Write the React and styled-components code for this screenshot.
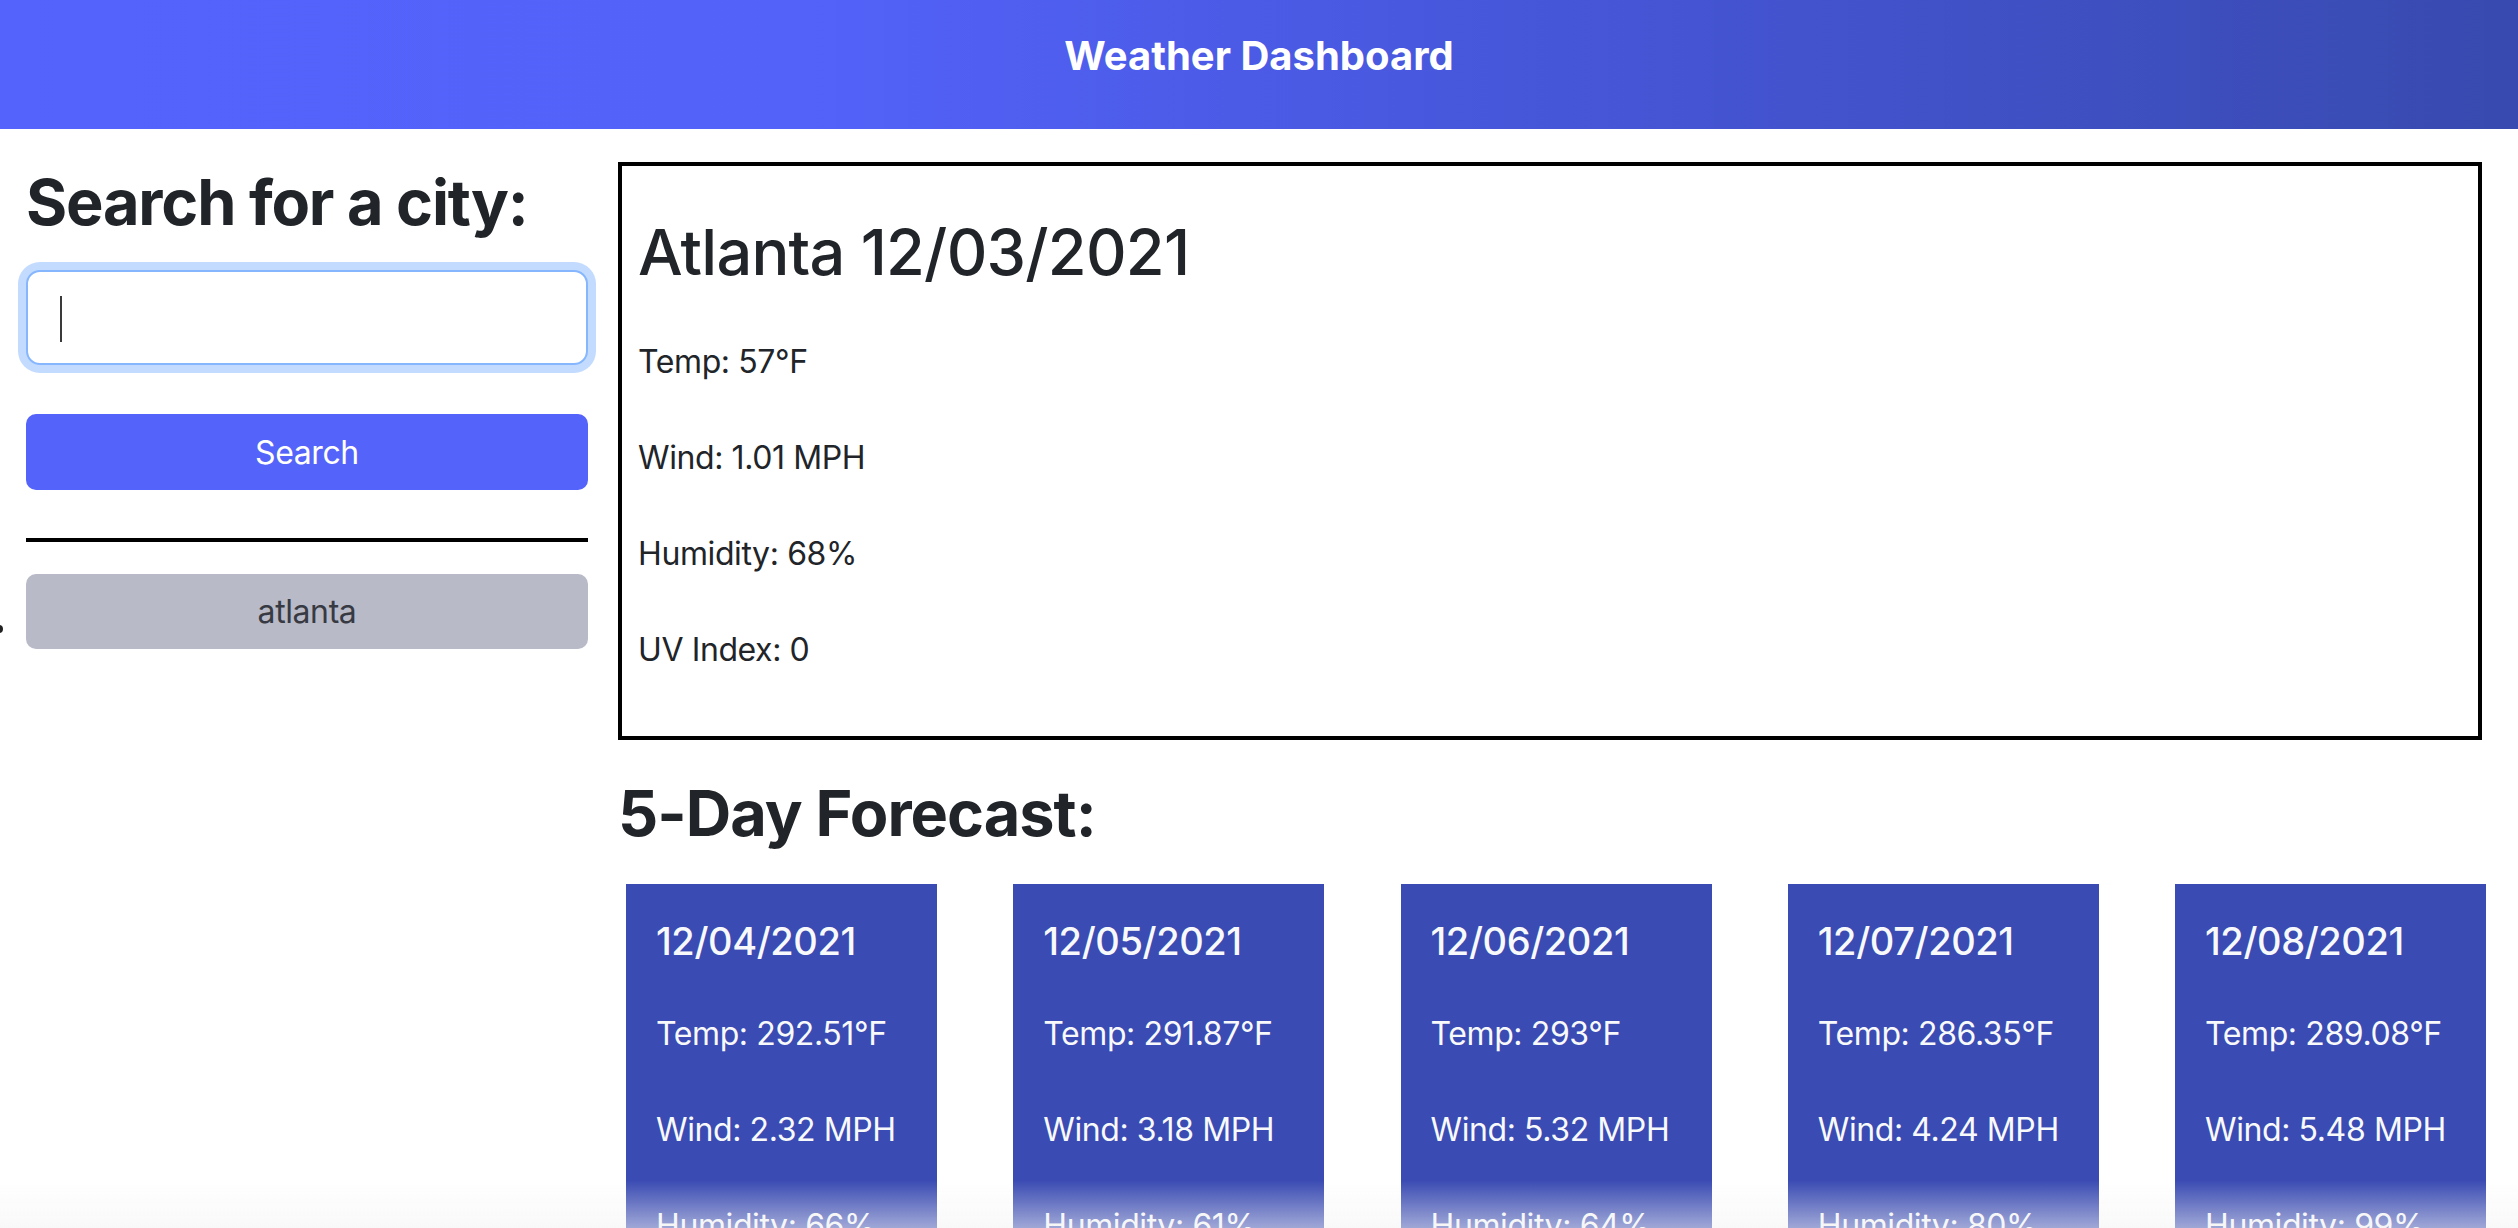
import React from 'react'
import styled, { createGlobalStyle } from 'styled-components'

const forecast = [
  { date: '12/04/2021', temp: '292.51', wind: '2.32', humidity: '66' },
  { date: '12/05/2021', temp: '291.87', wind: '3.18', humidity: '61' },
  { date: '12/06/2021', temp: '293', wind: '5.32', humidity: '64' },
  { date: '12/07/2021', temp: '286.35', wind: '4.24', humidity: '80' },
  { date: '12/08/2021', temp: '289.08', wind: '5.48', humidity: '99' },
]

const App = () => {
  return (
    <>
      <GlobalStyle />
      <Header>
        <HeaderTitle>Weather Dashboard</HeaderTitle>
      </Header>
      <Main>
        <Sidebar>
          <SideTitle>Search for a city:</SideTitle>
          <InputWrap>
            <CityInput type='text' />
            <Caret />
          </InputWrap>
          <SearchButton>Search</SearchButton>
          <Divider />
          <HistoryButton>atlanta</HistoryButton>
        </Sidebar>
        <Content>
          <Current>
            <CityTitle>Atlanta 12/03/2021</CityTitle>
            <Lines>
              <Line>Temp: 57°F</Line>
              <Line>Wind: 1.01 MPH</Line>
              <Line>Humidity: 68%</Line>
              <Line>UV Index: 0</Line>
            </Lines>
          </Current>
          <ForecastTitle>5-Day Forecast:</ForecastTitle>
          <ForecastRow>
            {forecast.map((day) => (
              <DayCard key={day.date}>
                <DayDate>{day.date}</DayDate>
                <Lines>
                  <Line light>Temp: {day.temp}°F</Line>
                  <Line light>Wind: {day.wind} MPH</Line>
                  <Line light>Humidity: {day.humidity}%</Line>
                </Lines>
              </DayCard>
            ))}
          </ForecastRow>
        </Content>
      </Main>
      <BottomFade />
    </>
  )
}

export default App

const GlobalStyle = createGlobalStyle`
  * {
    box-sizing: border-box;
  }
  body {
    margin: 0;
    font-family: 'Inter', 'Noto Sans', sans-serif;
    color: #212529;
    background: #ffffff;
  }
`

const Header = styled.header`
  height: 129px;
  padding-top: 32px;
  display: flex;
  justify-content: center;
  align-items: flex-start;
  background: linear-gradient(
    90deg,
    #5463fb 0%,
    #5362f9 32%,
    #4656d8 62%,
    #384aaf 100%
  );
`
const HeaderTitle = styled.h1`
  margin: 0;
  font-size: 40px;
  line-height: 48px;
  font-weight: 700;
  color: #ffffff;
`
const Main = styled.main`
  display: flex;
  align-items: flex-start;
  padding: 33px 32px 0 26px;
`
const Sidebar = styled.aside`
  width: 562px;
  flex-shrink: 0;
  padding-top: 2px;
  display: flex;
  flex-direction: column;
`
const SideTitle = styled.h2`
  margin: 0 0 29px;
  font-size: 63px;
  line-height: 77px;
  font-weight: 700;
  letter-spacing: -1.2px;
  color: #212529;
`
const InputWrap = styled.div`
  position: relative;
  height: 95px;
`
const CityInput = styled.input`
  width: 100%;
  height: 95px;
  border: 2px solid #86b7fe;
  border-radius: 14px;
  box-shadow: 0 0 0 8px rgba(13, 110, 253, 0.25);
  outline: none;
  padding: 0 32px;
  font-family: 'Inter', sans-serif;
  font-size: 32px;
  background: #ffffff;
`
const Caret = styled.span`
  position: absolute;
  left: 34px;
  top: 26px;
  width: 2px;
  height: 46px;
  background: #3a3a3a;
`
const SearchButton = styled.button`
  margin-top: 49px;
  height: 76px;
  width: 100%;
  border: none;
  border-radius: 10px;
  background: #5463fa;
  color: #ffffff;
  font-family: 'Inter', sans-serif;
  font-size: 32px;
  font-weight: 400;
  letter-spacing: -0.4px;
`
const Divider = styled.hr`
  margin: 48px 0 32px;
  border: none;
  height: 4px;
  background: #000000;
  opacity: 1;
`
const HistoryButton = styled.button`
  position: relative;
  height: 75px;
  width: 100%;
  border: none;
  border-radius: 10px;
  background: #b8bac8;
  color: #373a42;
  font-family: 'Inter', sans-serif;
  font-size: 32px;
  font-weight: 400;
  letter-spacing: -0.4px;
  &::before {
    content: '';
    position: absolute;
    left: -31px;
    top: 51px;
    width: 8px;
    height: 8px;
    border-radius: 50%;
    background: #222222;
  }
`
const Content = styled.section`
  flex: 1;
  margin-left: 30px;
  display: flex;
  flex-direction: column;
`
const Current = styled.div`
  margin-right: 4px;
  height: 578px;
  border: 4px solid #000000;
  padding: 48px 16px 0;
`
const CityTitle = styled.h2`
  margin: 0 0 47px;
  font-size: 63px;
  line-height: 77px;
  font-weight: 500;
  letter-spacing: -0.75px;
  color: #212529;
`
const Lines = styled.div`
  display: flex;
  flex-direction: column;
  gap: 48px;
`
const Line = styled.p`
  margin: 0;
  font-size: 32px;
  line-height: 48px;
  letter-spacing: -0.4px;
  color: ${(props) => (props.light ? '#f8f9fa' : '#212529')};
`
const ForecastTitle = styled.h2`
  margin: 35px 0 32px;
  font-size: 63px;
  line-height: 77px;
  font-weight: 700;
  letter-spacing: -1px;
  color: #212529;
`
const ForecastRow = styled.div`
  display: flex;
  justify-content: space-between;
  padding-left: 8px;
`
const DayCard = styled.div`
  width: 311px;
  background: #3a4bb3;
  padding: 34px 30px 40px;
`
const DayDate = styled.h5`
  margin: 0 0 46px;
  font-size: 38px;
  line-height: 46px;
  font-weight: 500;
  letter-spacing: -0.4px;
  color: #f8f9fa;
`
const BottomFade = styled.div`
  position: fixed;
  left: 0;
  right: 0;
  bottom: 0;
  height: 48px;
  pointer-events: none;
  background: linear-gradient(
    180deg,
    rgba(255, 255, 255, 0) 0%,
    rgba(244, 244, 244, 0.55) 100%
  );
`
